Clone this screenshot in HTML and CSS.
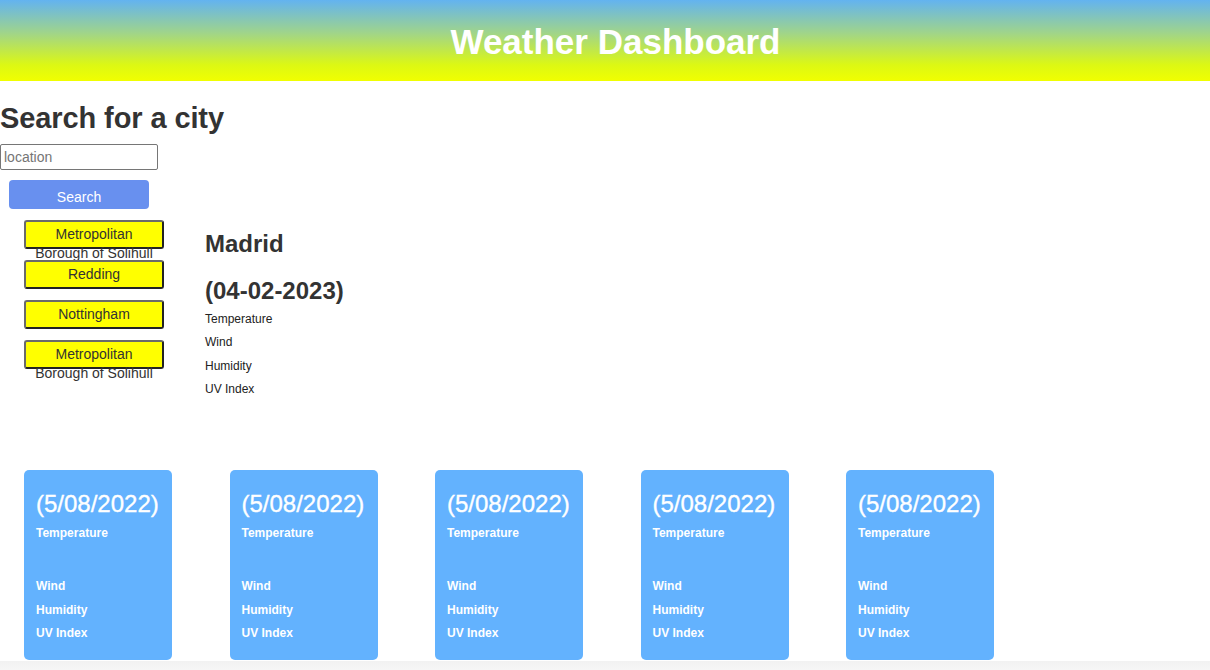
FILE: index.html
```html
<!DOCTYPE html>
<html lang="en">
<head>
<meta charset="utf-8">
<title>Weather Dashboard</title>
<link rel="stylesheet" href="styles.css">
</head>
<body>
<header class="header">
  <h1 class="title">Weather Dashboard</h1>
</header>
<section class="search">
  <h2 class="search-title">Search for a city</h2>
  <input class="search-input" type="text" placeholder="location">
  <button class="search-btn" type="button">Search</button>
</section>
<section class="row">
  <div class="history">
    <button class="city-btn" type="button"><span>Metropolitan Borough of Solihull</span></button>
    <button class="city-btn" type="button"><span>Redding</span></button>
    <button class="city-btn" type="button"><span>Nottingham</span></button>
    <button class="city-btn" type="button"><span>Metropolitan Borough of Solihull</span></button>
  </div>
  <div class="current">
    <h2 class="city-name">Madrid</h2>
    <h2 class="city-date">(04-02-2023)</h2>
    <div class="stats">
      <p>Temperature</p>
      <p>Wind</p>
      <p>Humidity</p>
      <p>UV Index</p>
    </div>
  </div>
</section>
<section class="forecast">
  <div class="card"><h3 class="card-date">(5/08/2022)</h3><p class="temp">Temperature</p><p>Wind</p><p>Humidity</p><p>UV Index</p></div>
  <div class="card"><h3 class="card-date">(5/08/2022)</h3><p class="temp">Temperature</p><p>Wind</p><p>Humidity</p><p>UV Index</p></div>
  <div class="card"><h3 class="card-date">(5/08/2022)</h3><p class="temp">Temperature</p><p>Wind</p><p>Humidity</p><p>UV Index</p></div>
  <div class="card"><h3 class="card-date">(5/08/2022)</h3><p class="temp">Temperature</p><p>Wind</p><p>Humidity</p><p>UV Index</p></div>
  <div class="card"><h3 class="card-date">(5/08/2022)</h3><p class="temp">Temperature</p><p>Wind</p><p>Humidity</p><p>UV Index</p></div>
</section>
<div class="bottom-strip"></div>
</body>
</html>
```
FILE: styles.css
```css
html, body {
  margin: 0;
  padding: 0;
  background: #ffffff;
  font-family: "Liberation Sans", Arial, Helvetica, sans-serif;
  color: #222;
}

.header {
  height: 81px;
  padding-left: 21px;
  background: linear-gradient(to bottom, #63b3f0 0%, #9fd48c 40%, #dcf814 80%, #f1ff00 100%);
  display: flex;
  align-items: center;
  justify-content: center;
}

.title {
  margin: 2px 0 0 0;
  color: #ffffff;
  font-size: 35px;
  font-weight: bold;
  line-height: normal;
}

.search {
  display: flex;
  flex-direction: column;
  align-items: flex-start;
}

.search-title {
  margin: 20px 0 9px 0;
  font-size: 29px;
  line-height: 34px;
  font-weight: bold;
  color: #333;
  letter-spacing: -0.1px;
}

.search-input {
  box-sizing: border-box;
  width: 158px;
  height: 26px;
  margin: 0;
  padding: 0 3px;
  border: 1px solid #767676;
  border-radius: 2px;
  font-family: "Liberation Sans", Arial, sans-serif;
  font-size: 14px;
  color: #222;
}

.search-input::placeholder {
  color: #757575;
}

.search-btn {
  box-sizing: border-box;
  width: 140px;
  height: 29px;
  margin: 10px 0 0 9px;
  padding: 4px 0 0 0;
  border: none;
  border-radius: 4px;
  background: #6890ef;
  color: #ffffff;
  font-family: "Liberation Sans", Arial, sans-serif;
  font-size: 14px;
}

.row {
  display: flex;
  margin-top: 11px;
}

.history {
  display: flex;
  flex-direction: column;
  gap: 11px;
  margin-left: 24px;
  width: 140px;
}

.city-btn {
  box-sizing: border-box;
  width: 140px;
  height: 29px;
  margin: 0;
  padding: 3px 2px 0 2px;
  display: flex;
  justify-content: center;
  align-items: flex-start;
  overflow: visible;
  background: #ffff00;
  border-style: solid;
  border-width: 2px;
  border-color: #6a6a6a #222 #222 #6a6a6a;
  border-radius: 3px;
  color: #333;
  font-family: "Liberation Sans", Arial, sans-serif;
  font-size: 14px;
  line-height: 19px;
  text-align: center;
}

.current {
  margin-left: 41px;
}

.city-name,
.city-date {
  margin: 0;
  font-size: 24px;
  line-height: 28px;
  font-weight: bold;
  color: #333;
}

.city-name {
  margin-top: 10px;
}

.city-date {
  margin-top: 19px;
}

.stats {
  margin-top: 3px;
}

.stats p {
  margin: 0;
  font-size: 12px;
  line-height: 23.3px;
  color: #222;
}

.forecast {
  display: flex;
  gap: 57.5px;
  margin: 69px 0 0 24px;
}

.card {
  box-sizing: border-box;
  width: 148px;
  height: 190px;
  padding: 0 12px;
  border-radius: 5px;
  background: #63b2fe;
  color: #ffffff;
}

.card-date {
  margin: 20px 0 0 0;
  font-size: 24px;
  line-height: 28px;
  font-weight: normal;
  -webkit-text-stroke: 0.35px #ffffff;
}

.card p {
  margin: 0;
  font-size: 12px;
  line-height: 23.5px;
  font-weight: bold;
}

.card .temp {
  margin-top: 4px;
  height: 53px;
}

.bottom-strip {
  height: 20px;
  margin-top: 1px;
  background: linear-gradient(to bottom, #f2f2f2, #fbfbfb);
}
```
